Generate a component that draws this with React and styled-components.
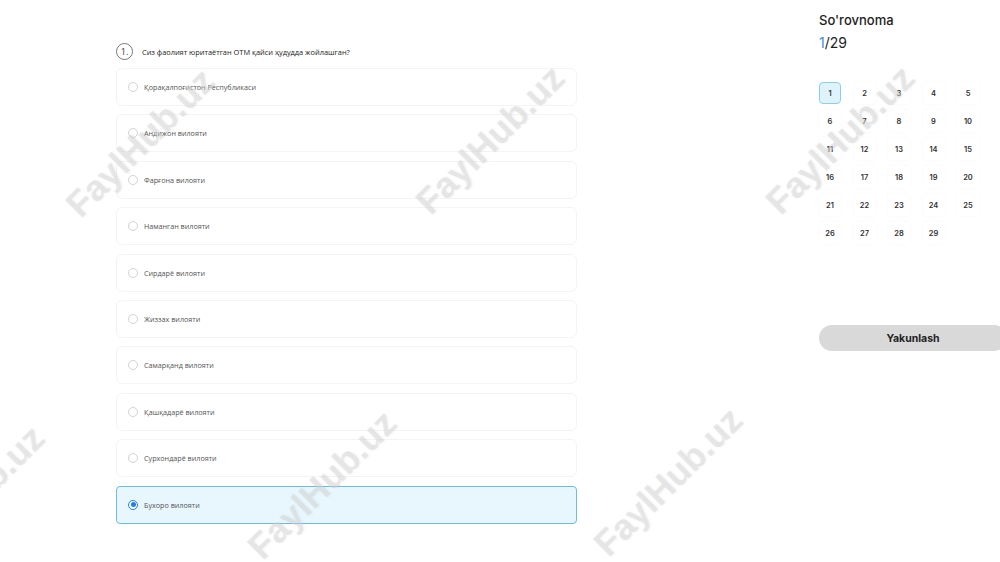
import React from "react";
import styled, { createGlobalStyle } from "styled-components";

const GlobalStyle = createGlobalStyle`
  html, body {
    margin: 0;
    padding: 0;
    background: #fff;
  }
  body {
    width: 1000px;
    height: 562px;
    overflow: hidden;
    font-family: "Open Sans", "Noto Sans", sans-serif;
  }
`;

const Page = styled.div`
  position: relative;
  display: flex;
  align-items: flex-start;
  width: 1000px;
  height: 562px;
  padding-left: 116px;
  box-sizing: border-box;
  overflow: hidden;
`;

const Main = styled.main`
  width: 461px;
  flex-shrink: 0;
  padding-top: 43px;
`;

const Question = styled.div`
  display: flex;
  align-items: center;
  gap: 9px;
  height: 17px;
  margin-bottom: 8px;
`;

const Number = styled.span`
  width: 15px;
  height: 15px;
  border: 1px solid #777;
  border-radius: 50%;
  display: flex;
  align-items: center;
  justify-content: center;
  font-size: 9px;
  color: #333;
  line-height: 1;
`;

const QuestionText = styled.p`
  margin: 0;
  font-size: 7.4px;
  font-weight: 500;
  color: #222;
`;

const Options = styled.div`
  display: flex;
  flex-direction: column;
  gap: 8.4px;
`;

const Option = styled.label`
  display: flex;
  align-items: center;
  gap: 6px;
  height: 38px;
  box-sizing: border-box;
  padding-left: 11px;
  border-radius: ${(p) => (p.$active ? "4px" : "6px")};
  border: 1px solid ${(p) => (p.$active ? "#6cbbe8" : "#f4f4f4")};
  background: ${(p) => (p.$active ? "#e8f7fd" : "#fff")};
  font-size: 7.2px;
  color: #555;
`;

const Radio = styled.span`
  width: 10px;
  height: 10px;
  box-sizing: border-box;
  border-radius: 50%;
  border: 1px solid ${(p) => (p.$active ? "#1f7fe5" : "#d3d3d3")};
  background: #fff;
  display: flex;
  align-items: center;
  justify-content: center;
  &::after {
    content: "";
    width: 5px;
    height: 5px;
    border-radius: 50%;
    background: ${(p) => (p.$active ? "#1f7fe5" : "transparent")};
  }
`;

const Sidebar = styled.aside`
  margin-left: 242px;
  padding-top: 11px;
  width: 190px;
  flex-shrink: 0;
  font-family: "Inter", "Lato", sans-serif;
`;

const Title = styled.h2`
  margin: 0;
  font-size: 13px;
  font-weight: 500;
  color: #222;
  line-height: 18px;
`;

const Counter = styled.div`
  margin-top: 5px;
  font-size: 14px;
  font-weight: 400;
  color: #222;
  line-height: 18px;
  span {
    color: #3d8fd8;
  }
`;

const Grid = styled.div`
  margin-top: 30px;
  display: grid;
  grid-template-columns: repeat(5, 22px);
  column-gap: 12.5px;
  row-gap: 6px;
`;

const Cell = styled.div`
  width: 22px;
  height: 22px;
  box-sizing: border-box;
  border-radius: 4px;
  display: flex;
  align-items: center;
  justify-content: center;
  font-size: 7.5px;
  font-weight: 600;
  color: #333;
  background: ${(p) => (p.$active ? "#dff3fd" : "#fff")};
  border: 1px solid ${(p) => (p.$active ? "#8ccdf0" : "transparent")};
  box-shadow: ${(p) => (p.$active ? "none" : "0 0 3px rgba(0,0,0,0.04)")};
`;

const Finish = styled.button`
  margin-top: 81px;
  width: 188px;
  height: 26px;
  border: none;
  border-radius: 13px;
  background: #d9d9d9;
  font-family: "Inter", sans-serif;
  font-size: 10.5px;
  font-weight: 700;
  color: #222;
`;

const Watermark = styled.div`
  position: absolute;
  left: ${(p) => p.$x}px;
  top: ${(p) => p.$y}px;
  transform: translate(-50%, -50%) rotate(-45deg);
  font-family: "Liberation Sans", sans-serif;
  font-size: 36px;
  font-weight: 700;
  white-space: nowrap;
  color: rgba(215, 215, 215, 0.5);
  text-shadow: 1px 1px 2px rgba(0, 0, 0, 0.05);
  pointer-events: none;
`;

const options = [
  "Қорақалпоғистон Республикаси",
  "Андижон вилояти",
  "Фарғона вилояти",
  "Наманган вилояти",
  "Сирдарё вилояти",
  "Жиззах вилояти",
  "Самарқанд вилояти",
  "Қашқадарё вилояти",
  "Сурхондарё вилояти",
  "Бухоро вилояти",
];

const marks = [
  [140, 143],
  [490, 140],
  [840, 140],
  [-30, 500],
  [322, 485],
  [668, 482],
];

export default function App() {
  const selected = 9;
  return (
    <>
      <GlobalStyle />
      <Page>
        <Main>
          <Question>
            <Number>1.</Number>
            <QuestionText>Сиз фаолият юритаётган ОТМ қайси ҳудудда жойлашган?</QuestionText>
          </Question>
          <Options>
            {options.map((o, i) => (
              <Option key={o} $active={i === selected}>
                <Radio $active={i === selected} />
                {o}
              </Option>
            ))}
          </Options>
        </Main>
        <Sidebar>
          <Title>So'rovnoma</Title>
          <Counter>
            <span>1</span>/29
          </Counter>
          <Grid>
            {Array.from({ length: 29 }, (_, i) => (
              <Cell key={i} $active={i === 0}>
                {i + 1}
              </Cell>
            ))}
          </Grid>
          <Finish>Yakunlash</Finish>
        </Sidebar>
        {marks.map(([x, y], i) => (
          <Watermark key={i} $x={x} $y={y}>
            FaylHub.uz
          </Watermark>
        ))}
      </Page>
    </>
  );
}
